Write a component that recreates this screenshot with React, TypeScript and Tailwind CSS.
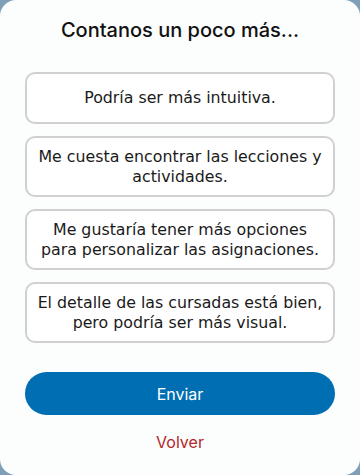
import React from "react";

const options = [
  "Podría ser más intuitiva.",
  "Me cuesta encontrar las lecciones y actividades.",
  "Me gustaría tener más opciones para personalizar las asignaciones.",
  "El detalle de las cursadas está bien, pero podría ser más visual.",
];

export default function App() {
  return (
    <div className="w-[360px] h-[475px] bg-[#7f9fb8]">
      <div className="w-full h-full bg-[#fcfdfd] rounded-[16px] flex flex-col px-[25px] font-['DejaVu_Sans',sans-serif]">
        <h1 className="text-center text-[20px] leading-[24px] font-medium text-[#111] mt-[18px] font-['Inter',sans-serif]">
          Contanos un poco más...
        </h1>
        <div className="flex flex-col gap-[12px] mt-[30px]">
          {options.map((o, i) => (
            <button
              key={i}
              className={`w-full border-2 border-[#d0d0d0] rounded-[10px] bg-white text-[15.8px] leading-[20px] text-[#1a1a1a] text-center px-[6px] ${
                i === 0 ? "h-[52px]" : "h-[61px]"
              }`}
            >
              {o}
            </button>
          ))}
        </div>
        <button className="mt-[29px] h-[43px] w-full rounded-full bg-[#006eb2] text-white text-[16px] font-['Inter',sans-serif]">
          Enviar
        </button>
        <button className="mt-[15px] text-[#b3262a] text-[16px] font-['Inter',sans-serif]">
          Volver
        </button>
      </div>
    </div>
  );
}
